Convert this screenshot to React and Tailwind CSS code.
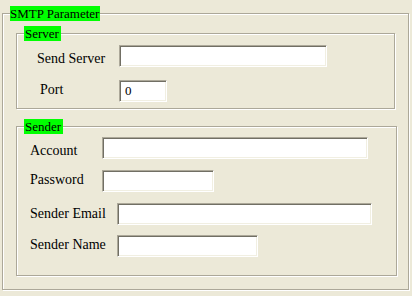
import React from "react";

const etched = "border border-[#aca899] shadow-[inset_1px_1px_0_#ffffff,1px_1px_0_#ffffff]";
const legendCls = "ml-[7px] h-[15px] bg-[#00ff00] text-[13px] leading-[15px] text-black whitespace-nowrap";
const inputCls =
  "h-[22px] bg-white border border-t-[#aca899] border-l-[#aca899] border-b-white border-r-white shadow-[inset_1px_1px_0_#716f64,inset_-1px_-1px_0_#f1efe2] pl-[5px] text-[13px] text-black outline-none font-['Liberation_Serif','Times_New_Roman',serif]";

function Row({ label, labelCls, inputW, value, className }) {
  return (
    <div className={"flex items-center " + className}>
      <div className={"shrink-0 text-[14px] text-black leading-[16px] " + labelCls}>{label}</div>
      <input className={inputCls + " " + inputW} defaultValue={value} readOnly />
    </div>
  );
}

export default function App() {
  return (
    <div className="w-[412px] h-[296px] bg-[#ece9d8] pt-[6px] pl-[2px] overflow-hidden font-['Liberation_Serif','Times_New_Roman',serif]">
      <fieldset className={"w-[407px] h-[284px] " + etched}>
        <legend className={legendCls + " w-[90px]"}>SMTP Parameter</legend>
        <fieldset className={"ml-[13px] mt-[5px] w-[379px] h-[83px] " + etched}>
          <legend className={legendCls + " w-[37px] pl-[1px]"}>Server</legend>
          <Row className="mt-[3px]" label="Send Server" labelCls="w-[102px] pl-[20px] pt-[7px]" inputW="w-[208px]" />
          <Row className="mt-[13px]" label="Port" labelCls="w-[102px] pl-[23px] pb-[2px]" inputW="w-[48px]" value="0" />
        </fieldset>
        <fieldset className={"ml-[13px] mt-[10px] w-[381px] h-[157px] " + etched}>
          <legend className={legendCls + " w-[39px] pl-[1px]"}>Sender</legend>
          <Row className="mt-[3px]" label="Account" labelCls="w-[85px] pl-[13px] pt-[6px]" inputW="w-[266px]" />
          <Row className="mt-[11px]" label="Password" labelCls="w-[85px] pl-[13px] pb-[3px]" inputW="w-[112px]" />
          <Row className="mt-[11px]" label="Sender Email" labelCls="w-[100px] pl-[13px]" inputW="w-[255px]" />
          <Row className="mt-[10px]" label="Sender Name" labelCls="w-[100px] pl-[13px] pb-[3px]" inputW="w-[141px]" />
        </fieldset>
      </fieldset>
    </div>
  );
}
